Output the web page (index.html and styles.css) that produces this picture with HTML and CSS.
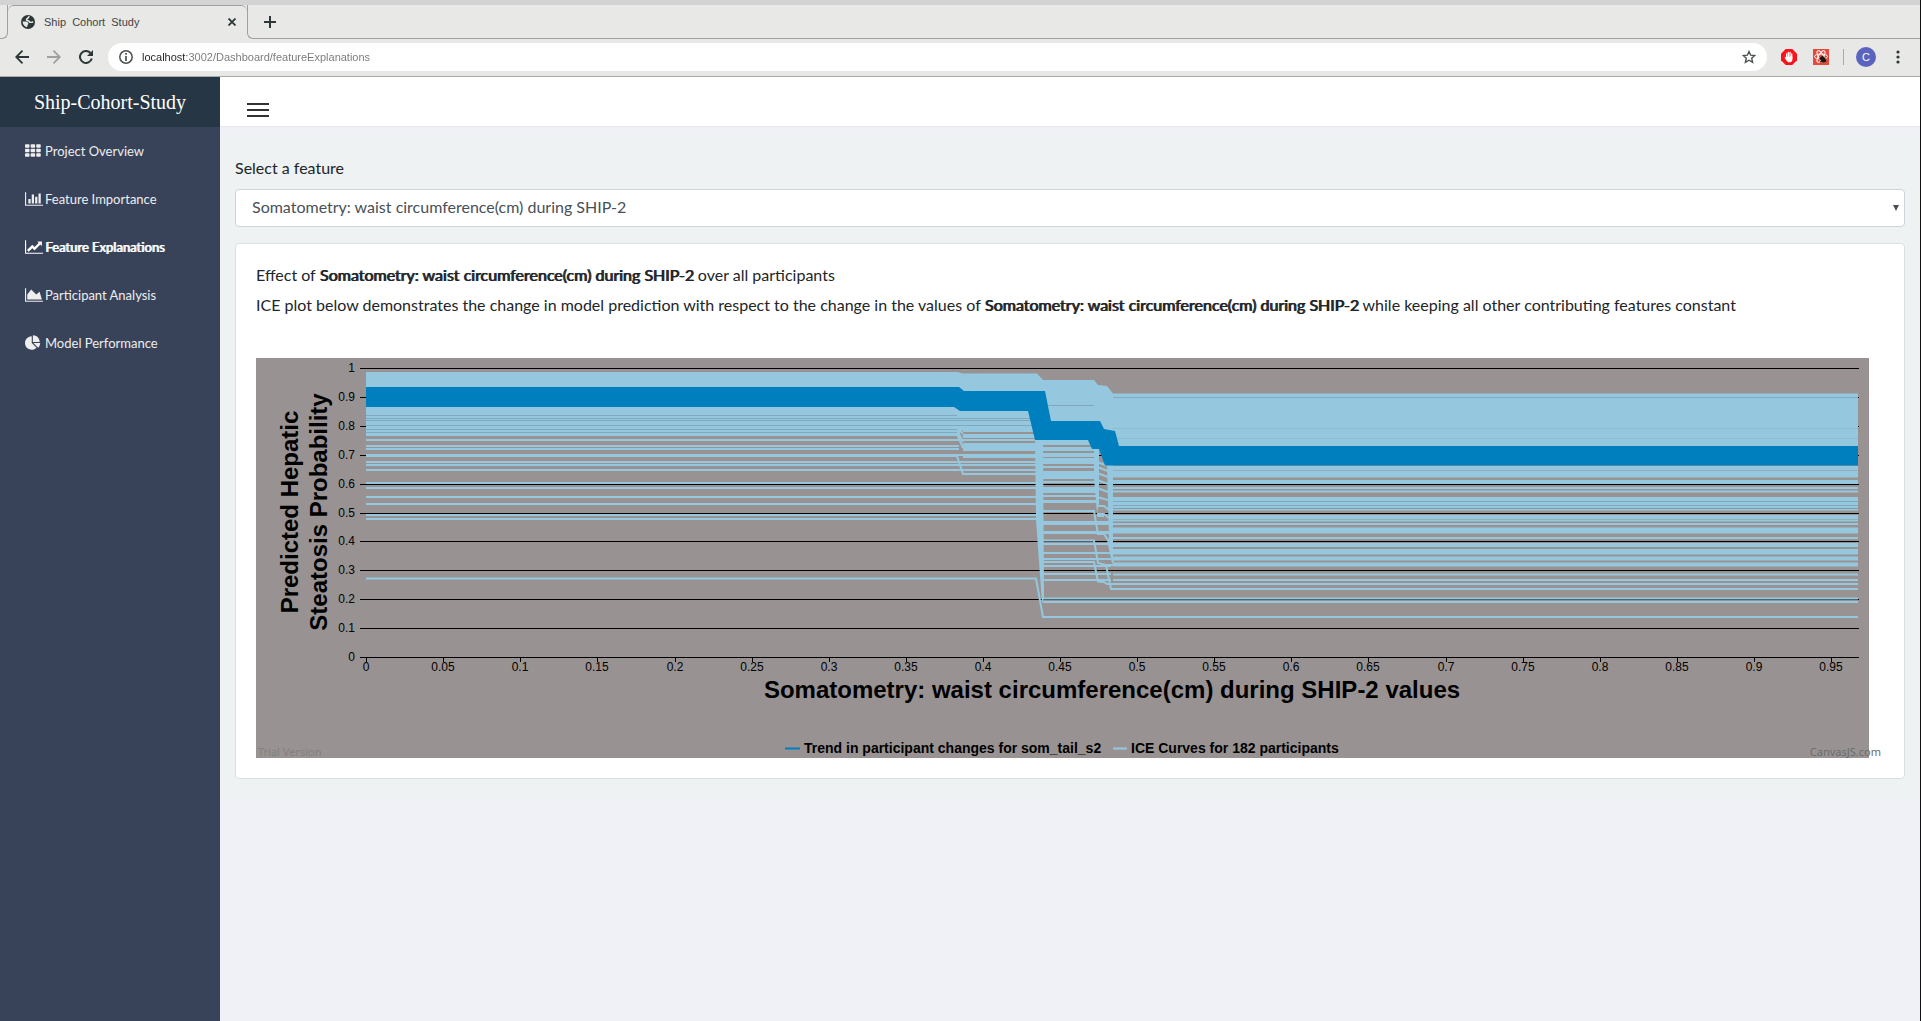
FILE: index.html
```html
<!DOCTYPE html>
<html lang="en">
<head>
<meta charset="utf-8">
<meta name="viewport" content="width=device-width, initial-scale=1">
<title>Ship Cohort Study</title>
<link rel="stylesheet" href="styles.css">
</head>
<body>
<div class="window">
  <header class="browser">
    <div class="tabs">
      <div class="tab-edge"></div>
      <div class="tab">
        <svg class="favicon" viewBox="0 0 14 14" aria-hidden="true"><circle cx="7" cy="7" r="7" fill="#2c3738"/><path d="M8.500 1.500C7 1.500 7.500 3 6.500 3.500 5 4 5.500 5 6 5.500c1.500.500 2.500.500 2.500 1.500 1 .500 3 .300 3.500-.5" fill="none" stroke="#e8e8e6" stroke-width="1.600"/><path d="M1.500 6.500h3.500c1.500.500 2.500 1.500 2.500 2.500-1 .500-1 2-1.500 3.300-2.500-.8-4.300-3-4.500-5.800z" fill="#e8e8e6"/></svg>
        <span class="tab-title">Ship&nbsp; Cohort&nbsp; Study</span>
        <button class="icon-button" type="button" aria-label="Close tab"><svg width="8" height="8" viewBox="0 0 8 8"><path d="M.5.500l7 7m0-7l-7 7" stroke="#2c3738" stroke-width="1.800"/></svg></button>
      </div>
      <div class="tab-rest">
        <button class="icon-button" type="button" aria-label="New tab"><svg width="12" height="12" viewBox="0 0 12 12"><path d="M6 0v12M0 6h12" stroke="#2c3738" stroke-width="2"/></svg></button>
      </div>
    </div>
    <div class="toolbar">
      <button class="icon-button" type="button" aria-label="Back"><svg width="14" height="14" viewBox="0 0 14 14"><path d="M14 7H1.500M7.500.700L1.200 7l6.300 6.300" fill="none" stroke="#2c3738" stroke-width="1.800"/></svg></button>
      <button class="icon-button" type="button" aria-label="Forward"><svg width="14" height="14" viewBox="0 0 14 14"><path d="M0 7h12.500M6.500.700L12.800 7l-6.300 6.300" fill="none" stroke="#a0a19f" stroke-width="1.800"/></svg></button>
      <button class="icon-button" type="button" aria-label="Reload"><svg width="14" height="14" viewBox="0 0 14 14"><path d="M12.800 8.500A6 6 0 1 1 11.500 3" fill="none" stroke="#2c3738" stroke-width="2"/><path d="M14 0v6H8z" fill="#2c3738"/></svg></button>
      <div class="address">
        <svg width="14" height="14" viewBox="0 0 14 14" aria-hidden="true"><circle cx="7" cy="7" r="6.200" fill="none" stroke="#4a4f50" stroke-width="1.500"/><path d="M7 6v5M7 3v1.800" stroke="#4a4f50" stroke-width="1.700"/></svg>
        <input class="url" type="text" aria-label="Address" value="localhost:3002/Dashboard/featureExplanations">
        <button class="icon-button" type="button" aria-label="Bookmark"><svg width="14" height="14" viewBox="0 0 14 14"><path d="M7 1.500l1.700 3.700 4 .4-3 2.700.9 4L7 10.200l-3.600 2.100.9-4-3-2.700 4-.4z" fill="none" stroke="#4a4f50" stroke-width="1.400"/></svg></button>
      </div>
      <button class="icon-button" type="button" aria-label="Ad blocker"><svg width="16" height="16" viewBox="0 0 16 16"><path d="M4.700 0h6.600L16 4.700v6.600L11.300 16H4.700L0 11.300V4.700z" fill="#f9141c"/><path d="M5.600 9V5M7.300 8V3.500M9 8V3.500M10.700 9V5" stroke="#fff" stroke-width="1.300" stroke-linecap="round"/><path d="M5 7.500h6.400v3c0 1.700-1 2.700-2.400 2.700H8c-1 0-1.800-.6-2.400-1.500L3.500 8.800l1-.5z" fill="#fff"/></svg></button>
      <button class="icon-button" type="button" aria-label="React developer tools"><svg width="16" height="16" viewBox="0 0 16 16"><rect width="16" height="16" fill="#e5493c"/><g fill="none" stroke="#fff" stroke-width="1"><ellipse cx="8" cy="7.500" rx="6.500" ry="2.500"/><ellipse cx="8" cy="7.500" rx="6.500" ry="2.500" transform="rotate(60 8 7.500)"/><ellipse cx="8" cy="7.500" rx="6.500" ry="2.500" transform="rotate(120 8 7.500)"/></g><ellipse cx="10" cy="10.500" rx="2.500" ry="3.500" transform="rotate(-35 10 10.500)" fill="#1c1510"/><path d="M6 10l5-2M7 13l5-3M9 7l4 6" stroke="#1c1510"/></svg></button>
      <span class="separator"></span>
      <button class="avatar" type="button">C</button>
      <button class="icon-button" type="button" aria-label="Menu"><svg width="4" height="14" viewBox="0 0 4 14"><g fill="#2c3738"><circle cx="2" cy="2" r="1.600"/><circle cx="2" cy="7" r="1.600"/><circle cx="2" cy="12" r="1.600"/></g></svg></button>
    </div>
  </header>

  <div class="app">
    <aside class="sidebar">
      <div class="brand">Ship-Cohort-Study</div>
      <nav class="nav">
        <a class="nav-link" href="#"><svg class="nav-icon" viewBox="0 0 2048 1792" aria-hidden="true"><g fill="currentColor"><rect y="128" width="512" height="384" rx="96"/><rect x="640" y="128" width="512" height="384" rx="96"/><rect x="1280" y="128" width="512" height="384" rx="96"/><rect y="640" width="512" height="384" rx="96"/><rect x="640" y="640" width="512" height="384" rx="96"/><rect x="1280" y="640" width="512" height="384" rx="96"/><rect y="1152" width="512" height="384" rx="96"/><rect x="640" y="1152" width="512" height="384" rx="96"/><rect x="1280" y="1152" width="512" height="384" rx="96"/></g></svg>Project Overview</a>
        <a class="nav-link" href="#"><svg class="nav-icon" viewBox="0 0 2048 1792" aria-hidden="true"><path fill="currentColor" d="M640 896v512h-256v-512h256zm384-512v1024h-256v-1024h256zm1024 1152v128h-2048v-1536h128v1408h1920zm-640-896v768h-256v-768h256zm384-384v1152h-256v-1152h256z"/></svg>Feature Importance</a>
        <a class="nav-link active" href="#"><svg class="nav-icon" viewBox="0 0 2048 1792" aria-hidden="true"><path fill="currentColor" d="M2048 1536v128h-2048v-1536h128v1408h1920zm-128-1248v435q0 21-19.500 29.500t-35.500-7.500l-121-121-633 633q-10 10-23 10t-23-10l-233-233-416 416-192-192 585-585q10-10 23-10t23 10l233 233 464-464-121-121q-16-16-7.500-35.500t29.500-19.500h435q14 0 23 9t9 23z"/></svg>Feature Explanations</a>
        <a class="nav-link" href="#"><svg class="nav-icon" viewBox="0 0 2048 1792" aria-hidden="true"><path fill="currentColor" d="M2048 1536v128h-2048v-1536h128v1408h1920zm-384-1024l256 896h-1664v-576l448-576 576 576z"/></svg>Participant Analysis</a>
        <a class="nav-link" href="#"><svg class="nav-icon" viewBox="0 0 2048 1792" aria-hidden="true"><path fill="currentColor" d="M768 890l546 546q-106 108-247.500 168t-298.500 60q-209 0-385.500-103t-279.500-279.500-103-385.500 103-385.500 279.500-279.500 385.500-103v762zm187 6h773q0 157-60 298.500t-168 247.500zm709-128h-768v-768q209 0 385.500 103t279.500 279.500 103 385.500z"/></svg>Model Performance</a>
      </nav>
    </aside>

    <div class="page">
      <div class="topbar">
        <button class="burger" type="button" aria-label="Toggle menu"><span></span><span></span><span></span></button>
      </div>
      <main class="content">
        <label class="field-label" for="feature">Select a feature</label>
        <div class="select-wrap">
          <select class="select" id="feature"><option>Somatometry: waist circumference(cm) during SHIP-2</option></select>
          <svg class="select-arrow" width="6" height="6" viewBox="0 0 6 6" aria-hidden="true"><path d="M0 0h6L3 6z" fill="#495057"/></svg>
        </div>
        <section class="card">
          <p>Effect of <b>Somatometry: waist circumference(cm) during SHIP-2</b> over all participants</p>
          <p>ICE plot below demonstrates the change in model prediction with respect to the change in the values of <b>Somatometry: waist circumference(cm) during SHIP-2</b> while keeping all other contributing features constant</p>
          <figure class="chart">
            <svg class="plot" viewBox="0 0 1613 400" role="img" aria-label="ICE curves of predicted hepatic steatosis probability">
              <rect width="1613" height="400" fill="#989392"/>
              <path class="grid" d="M104 10.500H1603M104 39.500H1603M104 68.500H1603M104 97.500H1603M104 126.500H1603M104 155.500H1603M104 183.500H1603M104 212.500H1603M104 241.500H1603M104 270.500H1603M104 299.500H1603"/>
              <path class="grid" d="M110.500 300v4M187.500 300v4M264.500 300v4M341.500 300v4M419.500 300v4M496.500 300v4M573.500 300v4M650.500 300v4M727.500 300v4M804.500 300v4M881.500 300v4M958.500 300v4M1035.500 300v4M1112.500 300v4M1190.500 300v4M1267.500 300v4M1344.500 300v4M1421.500 300v4M1498.500 300v4M1575.500 300v4"/>
              <!-- envelope of the densest curves -->
              <path class="band" d="M110 14H701L707 15.500H781L787 22H838L842 27L851 28L857 35.500H1602V100H850L840 85H787V82H780V72H707L701 78H110z"/>
              <!-- left plateau -->
              <path class="ice" d="M110 82H703M110 88H703M110 91H703M110 97H780M110 98H701L707 116H780M110 104H780M110 107H780M110 112H780M110 125H780M110 130H780M110 139H780M110 146H780M110 157H780M110 161H780M110 220.500H780L787 259H1602"/>
              <path class="ice" d="M701 68L707 76M701 72L707 84M701 76L707 90M707 73H780M707 77H780M707 79H780M707 82H780M707 86H780M707 88H780M707 90H780M707 92H780M707 97H780M707 99H780"/>
              <!-- first drop -->
              <path class="band" d="M779 82H787L788 240L786 245L780 162z"/>
              <path class="ice" d="M787 84H840M787 86H840M787 90H840M787 92H840M787 96H840M787 98H840M787 101H840M787 103H840M787 105H840M787 109H840M787 114H840M787 116H840M787 118H840M787 120H840M787 124H840M787 130H840M787 132H840M787 134H840M787 138H840M787 143H840M787 144H840M787 164H855M787 166H855M787 174H855M787 175H855M787 186H855M787 195H855M787 201H855M787 208H855M787 216H855M787 222H855M787 240.500H1602M787 244H1602"/>
              <path class="ice" d="M787 153H838L842 176H848L852 182L857 205M787 182.500H838L842 205L850 207H857M787 204H838L842 223.500L848 224L851 226H857M850 207L855 231H1602"/>
              <!-- second drop -->
              <path class="band" d="M838 90H843V145L841 155L838 120zM851 106H857V206L853 182z"/>
              <path class="ice" d="M841 104L852 108M841 109L852 113M841 115L852 119M841 122L852 126M841 130L852 134M841 139L852 142M841 148H848L853 152M841 156H848L853 160M841 158H848"/>
              <!-- right plateau -->
              <path class="ice wide" d="M857 110H1602M857 114.500H1602M857 117.500H1602M857 124H1602M857 141H1602M857 145H1602M857 148H1602M857 159H1602M857 171.500H1602M857 173.500H1602M857 193H1602M857 194.500H1602M857 200.500H1602M857 206.500H1602"/>
              <path class="ice" d="M857 130H1602M857 133.500H1602M857 151.500H1602M857 162.500H1602M857 166H1602M857 180H1602M857 186H1602M857 188H1602M857 216.500H1602M857 222H1602M857 226H1602"/>
              <path class="seam" d="M110 57.500H701M110 60.500H780M110 62.500H780M110 67.500H780M110 71.500H701M110 74.500H701M787 47.500H838M857 39.500H1602M857 143.500H1602M857 147.500H1602M857 150.500H1602"/>
              <path class="seam faint" d="M857 70.500H1602M857 80.500H1602"/>
              <path fill="#007fbe" d="M110 29H703L708 33H789L795 63H844L848 71L859 73L863 88H1602V107.500H849L843 91H836L832 82H779L772 53H704L698 49H110z"/>
              <g class="tick end"><text x="99" y="14">1</text><text x="99" y="43">0.9</text><text x="99" y="72">0.8</text><text x="99" y="101">0.7</text><text x="99" y="130">0.6</text><text x="99" y="159">0.5</text><text x="99" y="187">0.4</text><text x="99" y="216">0.3</text><text x="99" y="245">0.2</text><text x="99" y="274">0.1</text><text x="99" y="303">0</text></g>
              <g class="tick"><text x="110" y="313">0</text><text x="187" y="313">0.05</text><text x="264" y="313">0.1</text><text x="341" y="313">0.15</text><text x="419" y="313">0.2</text><text x="496" y="313">0.25</text><text x="573" y="313">0.3</text><text x="650" y="313">0.35</text><text x="727" y="313">0.4</text><text x="804" y="313">0.45</text><text x="881" y="313">0.5</text><text x="958" y="313">0.55</text><text x="1035" y="313">0.6</text><text x="1112" y="313">0.65</text><text x="1190" y="313">0.7</text><text x="1267" y="313">0.75</text><text x="1344" y="313">0.8</text><text x="1421" y="313">0.85</text><text x="1498" y="313">0.9</text><text x="1575" y="313">0.95</text></g>
              <text class="axis-title" x="856" y="340">Somatometry: waist circumference(cm) during SHIP-2 values</text>
              <g class="axis-title" transform="rotate(-90)"><text x="-154" y="42">Predicted Hepatic</text><text x="-154" y="71">Steatosis Probability</text></g>
              <path d="M529 390.500h15" stroke="#007fbe" stroke-width="2"/>
              <path class="ice" d="M857 390.500h14"/>
              <text class="legend" x="548" y="395">Trend in participant changes for som_tail_s2</text>
              <text class="legend" x="875" y="395">ICE Curves for 182 participants</text>
            </svg>
            <span class="trial">Trial Version</span>
            <a class="credit" href="#">CanvasJS.com</a>
          </figure>
        </section>
      </main>
    </div>
  </div>
</div>
</body>
</html>
```
FILE: styles.css
```css
* { box-sizing: border-box; }

body {
  margin: 0;
  background: #f0f1f7;
  color: #212529;
  font: 16px/24px Lato, sans-serif;
}

button { border: 0; padding: 0; background: none; font: inherit; }
svg { display: block; flex: none; }

.window {
  display: flex;
  flex-direction: column;
  min-height: 100vh;
  border-right: 1px solid #111;
}

/* Browser chrome */
.browser {
  border-top: 5px solid #d3d3d3;
  border-bottom: 1px solid #a9aaa6;
  background: #e8e8e6;
  font-family: "Liberation Sans", sans-serif;
  font-size: 11px;
  color: #3d4445;
}

.icon-button { display: flex; align-items: center; }

.tabs { display: flex; height: 34px; }

.tab-edge {
  width: 8px;
  border: solid #a0a19f;
  border-width: 0 1px 1px 0;
  border-radius: 0 0 6px 0;
}

.tab {
  display: flex;
  align-items: center;
  width: 239px;
  padding: 0 11px 1px 13px;
  border-top: 1px solid #a0a19f;
  border-radius: 6px 6px 0 0;
}

.favicon { width: 14px; height: 14px; }
.tab-title { flex: 1; padding-left: 9px; white-space: nowrap; }

.tab-rest {
  display: flex;
  flex: 1;
  padding-left: 16px;
  border: solid #a0a19f;
  border-width: 0 0 1px 1px;
  border-radius: 0 0 0 6px;
}

.toolbar {
  display: flex;
  align-items: center;
  gap: 16px;
  height: 37px;
  padding: 0 20px 1px 15px;
}
.toolbar > .icon-button:nth-child(-n+2) { margin-right: 2px; }

.address {
  display: flex;
  flex: 1;
  align-items: center;
  gap: 9px;
  height: 28px;
  margin: 0 -2px 0 -1px;
  padding: 0 11px;
  border-radius: 14px;
  background: #fff;
}

.url {
  flex: 1;
  min-width: 0;
  border: 0;
  padding: 0;
  outline: 0;
  color: transparent;
  background: linear-gradient(90deg, #222 45px, #777 45px);
  -webkit-background-clip: text;
  background-clip: text;
  font: inherit;
}

.separator { width: 1px; height: 16px; background: #a9aaa6; margin: 0 -4px 0 -2px; }

.avatar {
  width: 20px;
  height: 20px;
  margin-right: 4px;
  border-radius: 50%;
  background: #5a64bf;
  color: #fff;
  font-size: 11px;
  line-height: 20px;
}

/* Application */
.app { display: flex; flex: 1; }

.sidebar {
  flex: none;
  width: 220px;
  background: #38435a;
  color: #eee;
}

.brand {
  height: 50px;
  background: #263645;
  color: #fff;
  font: 20px/50px "Liberation Serif", serif;
  text-align: center;
}

.nav-link {
  display: flex;
  align-items: center;
  gap: 2px;
  height: 48px;
  padding-left: 25px;
  color: #eee;
  font-size: 13px;
  text-decoration: none;
}

/* emphasis keeps the regular letter widths */
.nav-link.active,
.card b {
  font-weight: 400;
  text-shadow: 1px 0 currentColor;
}
.nav-link.active { color: #fff; }
.nav-icon { width: 18px; height: 16px; }

.page { flex: 1; min-width: 0; }

.topbar {
  display: flex;
  height: 50px;
  padding: 26px 27px 0;
  border-bottom: 1px solid #e9e9ed;
  background: #fff;
}

.burger { display: flex; flex-direction: column; gap: 4px; width: 22px; }
.burger span { width: 22px; height: 2px; background: #333; }

.content {
  margin-top: 10px;
  padding: 19px 15px 20px;
  background: #eef2f3;
}

.field-label { display: block; margin-bottom: 9px; }

.select-wrap { position: relative; margin-bottom: 16px; }

.select {
  appearance: none;
  display: block;
  width: 100%;
  height: 38px;
  padding: 0 16px 2px;
  border: 1px solid #ced4da;
  border-radius: 4px;
  background: #fff;
  color: #495057;
  font: inherit;
}

.select-arrow { position: absolute; right: 6px; top: 16px; }

.card {
  padding: 19px 20px 20px;
  border: 1px solid #dcdfe1;
  border-radius: 4px;
  background: #fff;
}
.card p { margin: 0 0 6px; }

.chart { position: relative; margin: 41px 0 0; padding-right: 15px; }

.plot { width: 100%; height: auto; }
.plot text { font-family: "Liberation Sans", sans-serif; }
.grid { fill: none; stroke: #000; }
.band { fill: #95c8de; }
.ice { fill: none; stroke: #95c8de; stroke-width: 2; }
.ice.wide { stroke-width: 4; }
.seam { stroke: #708a97; stroke-opacity: .5; }
.seam.faint { stroke-opacity: .2; }
.tick { font-size: 12px; text-anchor: middle; }
.tick.end { text-anchor: end; }
.axis-title { font-size: 24px; font-weight: 700; text-anchor: middle; }
.legend { font-size: 14px; font-weight: 700; }

.trial,
.credit {
  position: absolute;
  bottom: -2px;
  font: 11px/16px "Noto Sans", sans-serif;
}
.trial { left: 2px; color: #808080; }
.credit { right: 3px; color: #6c6c6c; text-decoration: none; }
```
